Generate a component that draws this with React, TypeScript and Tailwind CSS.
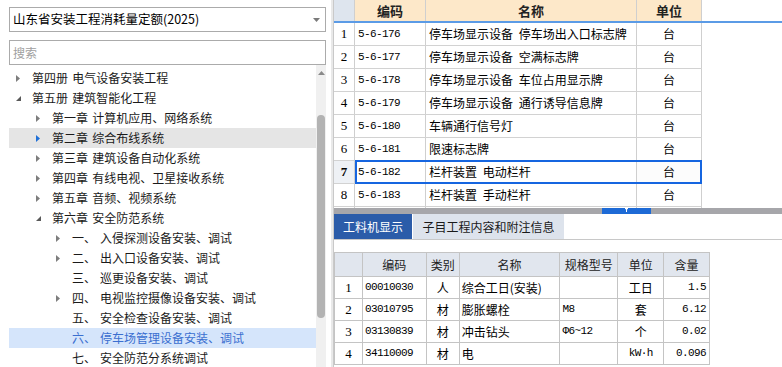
import React from 'react'

type Node = {
  level: 0 | 1 | 2
  arrow?: 'right' | 'down'
  num?: string
  text: string
  hover?: boolean
  selected?: boolean
}

const tree: Node[] = [
  { level: 0, arrow: 'right', text: '第四册 电气设备安装工程' },
  { level: 0, arrow: 'down', text: '第五册 建筑智能化工程' },
  { level: 1, arrow: 'right', text: '第一章 计算机应用、网络系统' },
  { level: 1, arrow: 'right', text: '第二章 综合布线系统', hover: true },
  { level: 1, arrow: 'right', text: '第三章 建筑设备自动化系统' },
  { level: 1, arrow: 'right', text: '第四章 有线电视、卫星接收系统' },
  { level: 1, arrow: 'right', text: '第五章 音频、视频系统' },
  { level: 1, arrow: 'down', text: '第六章 安全防范系统' },
  { level: 2, arrow: 'right', num: '一、', text: '入侵探测设备安装、调试' },
  { level: 2, arrow: 'right', num: '二、', text: '出入口设备安装、调试' },
  { level: 2, num: '三、', text: '巡更设备安装、调试' },
  { level: 2, arrow: 'right', num: '四、', text: '电视监控摄像设备安装、调试' },
  { level: 2, num: '五、', text: '安全检查设备安装、调试' },
  { level: 2, num: '六、', text: '停车场管理设备安装、调试', selected: true },
  { level: 2, num: '七、', text: '安全防范分系统调试' },
]

const indent = { 0: 'w-0', 1: 'w-[20px]', 2: 'w-[40px]' }

const quotas = [
  ['5-6-176', '停车场显示设备 停车场出入口标志牌'],
  ['5-6-177', '停车场显示设备 空满标志牌'],
  ['5-6-178', '停车场显示设备 车位占用显示牌'],
  ['5-6-179', '停车场显示设备 通行诱导信息牌'],
  ['5-6-180', '车辆通行信号灯'],
  ['5-6-181', '限速标志牌'],
  ['5-6-182', '栏杆装置 电动栏杆'],
  ['5-6-183', '栏杆装置 手动栏杆'],
]

const materials = [
  ['00010030', '人', '综合工日(安装)', '', '工日', '1.5'],
  ['03010795', '材', '膨胀螺栓', 'M8', '套', '6.12'],
  ['03130839', '材', '冲击钻头', 'Φ6~12', '个', '0.02'],
  ['34110009', '材', '电', '', 'kW·h', '0.096'],
]

const Arrow = ({ dir, active }: { dir?: 'right' | 'down'; active?: boolean }) => {
  if (!dir) return null
  if (dir === 'down')
    return (
      <svg width="5" height="5" viewBox="0 0 5 5">
        <polygon points="5,0 5,5 0,5" fill="#595959" />
      </svg>
    )
  return (
    <svg width="4" height="7" viewBox="0 0 4 7">
      <polygon points="0,0 4,3.5 0,7" fill={active ? '#1f6fd6' : '#7d7d7d'} />
    </svg>
  )
}

const TreePanel = () => (
  <div className="w-[331px] h-full flex flex-col pt-[7px] px-[9px] bg-white">
    <div className="h-[25px] w-[317px] border border-[#ababab] flex items-center justify-between pl-[3px] pr-[5px] text-[12.5px] text-black">
      <span>山东省安装工程消耗量定额(2025)</span>
      <svg width="7" height="4" viewBox="0 0 7 4">
        <polygon points="0,0 7,0 3.5,4" fill="#7a7a7a" />
      </svg>
    </div>
    <div className="mt-[8px] h-[25px] w-[317px] border border-[#ababab] flex items-center pl-[3px] text-[12px] text-[#a0a0a0]">
      搜索
    </div>
    <div className="flex flex-1 min-h-0 w-[317px]">
      <div className="flex-1 pt-[3px] overflow-hidden">
        {tree.map((n, i) => (
          <div
            key={i}
            className={
              'h-[20px] flex items-center text-[12px] whitespace-nowrap [word-spacing:1.5px] ' +
              (n.selected ? 'bg-[#d5e5fb] text-[#3b6fd0]' : n.hover ? 'bg-[#e5e5e5] text-[#1a1a1a]' : 'text-[#1a1a1a]')
            }
          >
            <div className={indent[n.level] + ' shrink-0'} />
            <div className="w-[23px] shrink-0 flex items-center pl-[7px]">
              <Arrow dir={n.arrow} active={n.hover} />
            </div>
            {n.num && <span className="w-[28px] shrink-0">{n.num}</span>}
            <span>{n.text}</span>
          </div>
        ))}
      </div>
      <div className="w-[10px] bg-[#f0f0f0] flex flex-col items-center pt-[6px]">
        <svg width="7" height="4" viewBox="0 0 7 4">
          <polygon points="3.5,0 7,4 0,4" fill="#8a8a8a" />
        </svg>
        <div className="mt-[40px] w-[8px] h-[203px] rounded-[4px] bg-[#b3b3b3]" />
      </div>
    </div>
  </div>
)

const QuotaTable = () => (
  <div className="h-[208px] flex flex-col">
    <div className="flex h-[23px] border-b-2 border-[#5b9be6]">
      <div className="w-[21px] bg-[#dee5ee] border-r border-[#cfcfcf]" />
      <div className="w-[71px] bg-[#fde8c9] border-r border-[#cfcfcf] flex items-center justify-center font-bold text-[13px] text-[#222]">编码</div>
      <div className="w-[211px] bg-[#fde8c9] border-r border-[#cfcfcf] flex items-center justify-center font-bold text-[13px] text-[#222]">名称</div>
      <div className="w-[65px] bg-[#fde8c9] border-r border-[#cfcfcf] flex items-center justify-center font-bold text-[13px] text-[#222]">单位</div>
    </div>
    {quotas.map(([code, name], i) => {
      const sel = i === 6
      return (
        <div key={code} className="relative flex h-[23px] border-b border-[#d2d2d2] w-[368px]">
          <div
            className={
              'w-[21px] border-r border-[#cfcfcf] flex items-center justify-center text-[13px] font-["Liberation_Serif",serif] ' +
              (sel ? 'bg-[#eef1f5] font-bold' : 'bg-white')
            }
          >
            {i + 1}
          </div>
          <div className="w-[71px] border-r border-[#cfcfcf] flex items-center pl-[3px] text-[11px] tracking-[-0.6px] font-['Liberation_Mono',monospace] text-black">
            {code}
          </div>
          <div className="w-[211px] border-r border-[#cfcfcf] flex items-center pl-[3px] text-[12px] text-black whitespace-nowrap [word-spacing:3px]">
            {name}
          </div>
          <div className={'w-[65px] border-r border-[#cfcfcf] flex items-center justify-center text-[12px] text-black ' + (sel ? 'bg-[#fcfcfc]' : '')}>
            台
          </div>
          {sel && <div className="absolute left-[21px] top-[-1px] w-[347px] h-[24px] border-2 border-[#1565e0]" />}
        </div>
      )
    })}
    <div className="flex flex-1">
      <div className="w-[21px] border-r border-[#cfcfcf]" />
      <div className="w-[71px] border-r border-[#cfcfcf]" />
      <div className="w-[211px] border-r border-[#cfcfcf]" />
      <div className="w-[65px] border-r border-[#cfcfcf]" />
    </div>
  </div>
)

const Splitter = () => (
  <div className="h-[6px] bg-[#a6a6aa] flex">
    <div className="w-[268px]" />
    <div className="w-[49px] bg-[#1d6ad6] flex justify-center">
      <svg width="3" height="4" viewBox="0 0 3 4">
        <rect x="0" y="0" width="3" height="1.2" fill="#fff" />
        <rect x="1" y="0" width="1" height="4" fill="#fff" />
      </svg>
    </div>
  </div>
)

const matHead = 'bg-[#e1e6ee] border-r border-[#c4c4c4] flex items-center justify-center text-[12px] text-[#222]'
const matCell = 'border-r border-[#c4c4c4] flex items-center text-black'
const mono = "font-['Liberation_Mono',monospace] text-[11px] tracking-[-0.6px]"

const MaterialPanel = () => (
  <div className="flex flex-col flex-1">
    <div className="h-[26px] flex items-end border-b border-[#c8c8c8]">
      <div className="h-[25px] w-[78px] bg-[#2b5ca9] text-white text-[12px] flex items-center justify-center">工料机显示</div>
      <div className="h-[25px] w-[151px] ml-px bg-[#dde3ec] text-[#1a1a1a] text-[12px] flex items-center justify-center">子目工程内容和附注信息</div>
    </div>
    <div className="mt-[12px] w-[376px] border-t border-l border-[#c4c4c4]">
      <div className="flex h-[24px] border-b border-[#c4c4c4]">
        <div className={'w-[28px] ' + matHead} />
        <div className={'w-[64px] ' + matHead}>编码</div>
        <div className={'w-[33px] ' + matHead}>类别</div>
        <div className={'w-[101px] ' + matHead}>名称</div>
        <div className={'w-[58px] ' + matHead}>规格型号</div>
        <div className={'w-[46px] ' + matHead}>单位</div>
        <div className={'w-[46px] ' + matHead}>含量</div>
      </div>
      {materials.map(([code, kind, name, spec, unit, qty], i) => (
        <div key={code} className="flex h-[22px] border-b border-[#c4c4c4]">
          <div className={'w-[28px] justify-center text-[13px] font-["Liberation_Serif",serif] ' + matCell}>{i + 1}</div>
          <div className={'w-[64px] pl-[2px] ' + mono + ' ' + matCell}>{code}</div>
          <div className={'w-[33px] justify-center text-[12px] ' + matCell}>{kind}</div>
          <div className={'w-[101px] pl-[2px] text-[12px] ' + matCell}>{name}</div>
          <div className={'w-[58px] pl-[2px] ' + mono + ' ' + matCell}>{spec}</div>
          <div className={'w-[46px] justify-center ' + (unit === 'kW·h' ? mono : 'text-[12px]') + ' ' + matCell}>{unit}</div>
          <div className={'w-[46px] justify-end pr-[3px] ' + mono + ' ' + matCell}>{qty}</div>
        </div>
      ))}
    </div>
  </div>
)

const App = () => {
  return (
    <div className="w-[782px] h-[367px] flex overflow-hidden bg-white font-['Noto_Sans_CJK_SC',sans-serif]">
      <TreePanel />
      <div className="w-[3px] bg-[#e9e9e9] border-r border-[#c9c9c9]" />
      <div className="flex-1 flex flex-col">
        <QuotaTable />
        <Splitter />
        <MaterialPanel />
      </div>
    </div>
  )
}

export default App
